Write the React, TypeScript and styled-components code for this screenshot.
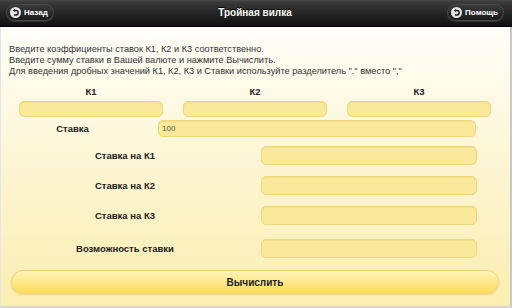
import * as React from 'react';
import styled, {createGlobalStyle} from 'styled-components';

const GlobalStyle = createGlobalStyle`
  html, body {
    margin: 0;
    padding: 0;
    background: #fff;
  }

  * {
    box-sizing: border-box;
  }
`;

const Page = styled.div`
  width: 512px;
  height: 308px;
  display: flex;
  flex-direction: column;
  font-family: "Liberation Sans", Arial, sans-serif;
  overflow: hidden;
`;

const Header = styled.div`
  height: 27px;
  flex: none;
  display: grid;
  grid-template-columns: 1fr auto 1fr;
  align-items: center;
  padding: 0 8px 1px 6px;
  background: linear-gradient(#4a4a4a 0, #3a3a3a 2px, #262626 12px, #111 100%);
  border-bottom: 1px solid #000;
`;

const Title = styled.div`
  color: #fff;
  font-size: 10px;
  font-weight: bold;
  text-shadow: 0 -1px 0 #000;
`;

const HeaderButton = styled.div<{$align: 'left' | 'right'}>`
  justify-self: ${(p) => (p.$align === 'left' ? 'start' : 'end')};
  height: 17px;
  display: flex;
  align-items: center;
  gap: 3px;
  padding: 0 5px 0 3px;
  border-radius: 9px;
  border: 1px solid #4a4a4a;
  background: linear-gradient(#3a3a3a, #1c1c1c);
  box-shadow: 0 1px 0 rgba(255, 255, 255, 0.12);
  color: #fff;
  font-size: 8px;
  font-weight: bold;
`;

const Body = styled.div`
  flex: 1;
  display: flex;
  flex-direction: column;
  padding: 17px 0 0 0;
  background: linear-gradient(#fffef9 0%, #fdf6d6 45%, #fbeeb0 100%);
  border-left: 1px solid #dfe7ee;
  border-right: 2px solid #c9c9c9;
  border-bottom: 2px solid #d6d6d6;
`;

const Intro = styled.div`
  padding-left: 8px;
  font-size: 9.2px;
  line-height: 11px;
  color: #333;
`;

const ColumnGrid = styled.div`
  display: grid;
  grid-template-columns: repeat(3, 144px);
  column-gap: 20px;
  row-gap: 3px;
  padding-left: 18px;
  margin-top: 9px;
`;

const ColumnLabel = styled.div`
  text-align: center;
  font-size: 9.5px;
  line-height: 12px;
  font-weight: bold;
  color: #222;
`;

const Field = styled.div<{$width: number; $height: number}>`
  width: ${(p) => p.$width}px;
  height: ${(p) => p.$height}px;
  display: flex;
  align-items: center;
  padding-left: 3px;
  border-radius: 5px;
  border: 1px solid #f1d67a;
  background: #fae89b;
  box-shadow: inset 0 1px 1px rgba(200, 160, 40, 0.15);
  font-size: 8px;
  color: #555;
`;

const Row = styled.div<{$labelWidth: number; $top: number}>`
  display: grid;
  grid-template-columns: ${(p) => p.$labelWidth}px auto;
  align-items: center;
  margin-top: ${(p) => p.$top}px;
`;

const RowLabel = styled.div`
  text-align: center;
  font-size: 9.5px;
  font-weight: bold;
  color: #222;
`;

const CalcButton = styled.div`
  margin: 12px 11px 0 10px;
  height: 24px;
  display: flex;
  align-items: center;
  justify-content: center;
  border-radius: 12px;
  border: 1px solid #f0d27a;
  background: linear-gradient(#fff3b8 0%, #fde98a 50%, #fbdc58 100%);
  box-shadow: 0 1px 2px rgba(170, 140, 40, 0.25);
  font-size: 10px;
  font-weight: bold;
  color: #222;
`;

function BackIcon() {
  return (
    <svg width="11" height="11" viewBox="0 0 10 10">
      <circle cx="5" cy="5" r="5" fill="#e6e6e6" />
      <path d="M4.1 3.2 H5.4 A2 2 0 0 1 5.4 7.2 H3.6" stroke="#1a1a1a" strokeWidth="1.3" fill="none" />
      <path d="M2.5 3.2 L4.4 1.7 L4.4 4.7 Z" fill="#1a1a1a" />
    </svg>
  );
}

const columns = ['К1', 'К2', 'К3'];
const results = [
  {label: 'Ставка на К1', top: 9},
  {label: 'Ставка на К2', top: 11},
  {label: 'Ставка на К3', top: 11},
  {label: 'Возможность ставки', top: 14},
];

export default function App() {
  return (
    <Page>
      <GlobalStyle />
      <Header>
        <HeaderButton $align='left'><BackIcon />Назад</HeaderButton>
        <Title>Тройная вилка</Title>
        <HeaderButton $align='right'><BackIcon />Помощь</HeaderButton>
      </Header>

      <Body>
        <Intro>
          Введите коэффициенты ставок К1, К2 и К3 соответственно.<br />
          Введите сумму ставки в Вашей валюте и нажмите Вычислить.<br />
          Для введения дробных значений К1, К2, К3 и Ставки используйте разделитель "." вместо ","
        </Intro>

        <ColumnGrid>
          {columns.map((c) => <ColumnLabel key={c}>{c}</ColumnLabel>)}
          {columns.map((c) => <Field key={c} $width={144} $height={16} />)}
        </ColumnGrid>

        <Row $labelWidth={157} $top={3}>
          <RowLabel style={{paddingRight: 14}}>Ставка</RowLabel>
          <Field $width={318} $height={17}>100</Field>
        </Row>

        {results.map((r) => (
          <Row key={r.label} $labelWidth={260} $top={r.top}>
            <RowLabel style={{paddingRight: 12}}>{r.label}</RowLabel>
            <Field $width={216} $height={19} />
          </Row>
        ))}

        <CalcButton>Вычислить</CalcButton>
      </Body>
    </Page>
  );
}
